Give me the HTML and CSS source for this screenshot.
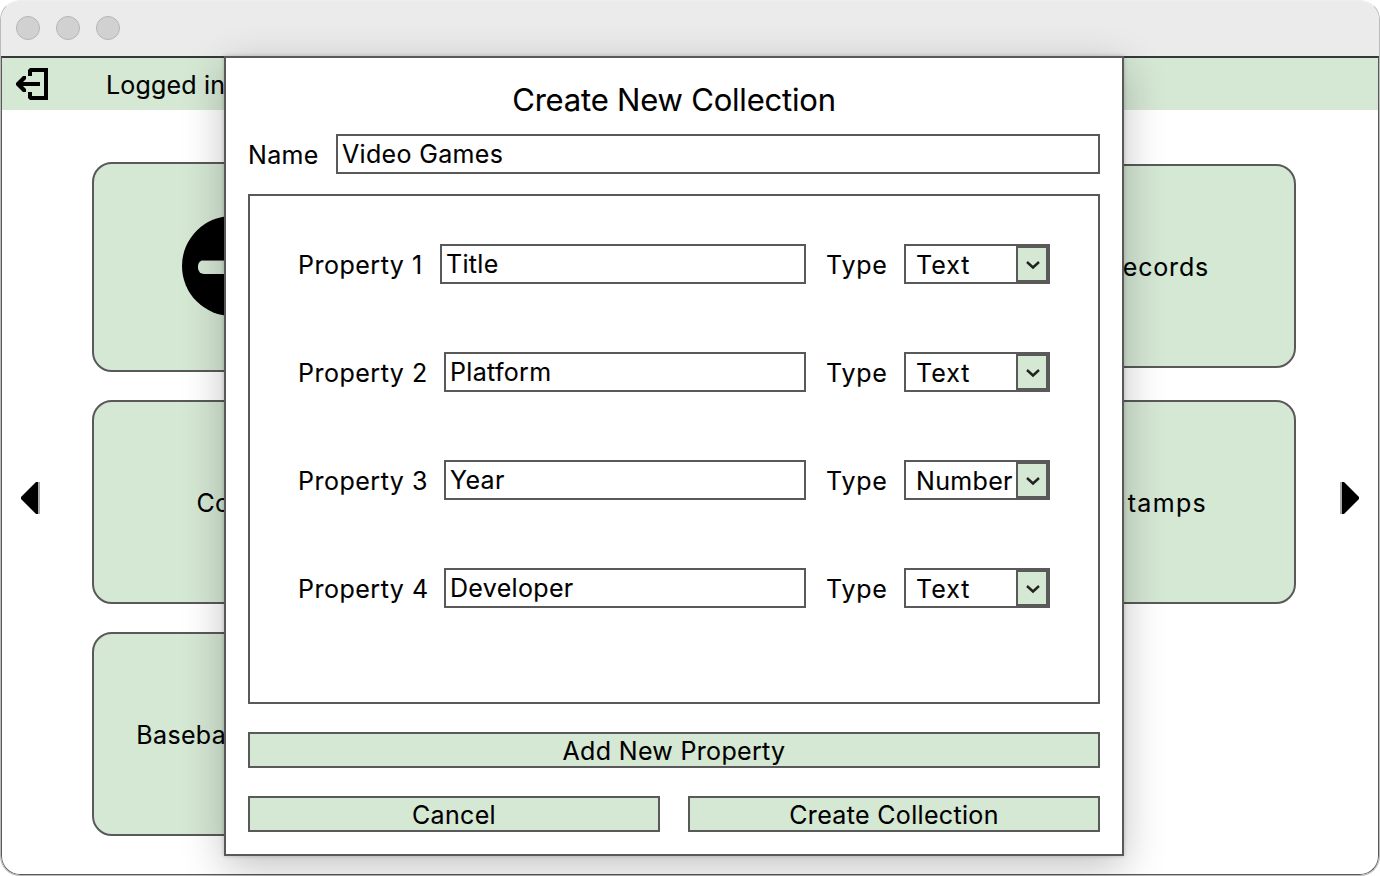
FILE: index.html
```html
<!DOCTYPE html>
<html lang="en">
<head>
<meta charset="utf-8">
<title>Create New Collection</title>
<link rel="stylesheet" href="styles.css">
</head>
<body>
<div class="window">
  <header class="titlebar"><i class="light"></i><i class="light"></i><i class="light"></i></header>
  <div class="userbar">
    <svg class="logout" width="34" height="34" viewBox="0 0 34 34"><path d="M13 3L15 1H33V33H15L13 31V25H17V29H29V5H17V9H13Z"/><path d="M5 15H25V19H5Z"/><path d="M1 16L8 9H11V12L6 17L11 22V25H8L1 18Z"/></svg>
    <span>Logged in</span>
  </div>
  <main class="page">
    <svg class="arrow" width="20" height="32" viewBox="0 0 20 32"><path d="M18 0V32H16L1 17V15L16 0Z"/><path d="M18 0H20V32H18Z" fill="#aaa"/></svg>
    <div class="cards">
      <div class="column left">
        <div class="card tall"><svg width="100" height="100" viewBox="0 0 100 100"><circle cx="50" cy="50" r="50"/><rect x="16" y="44" width="68" height="14" rx="6" fill="#d5e8d4"/><path d="M20 44.500H80" stroke="#666"/></svg></div>
        <div class="card">Coins</div>
        <div class="card"><span class="long">Baseball Cards</span></div>
      </div>
      <div class="column right">
        <div class="card">Records</div>
        <div class="card stamps"><span class="initial">S</span>tamps</div>
      </div>
    </div>
    <svg class="arrow" width="20" height="32" viewBox="0 0 20 32"><path d="M2 0V32H4L19 17V15L4 0Z"/><path d="M0 0H2V32H0Z" fill="#aaa"/></svg>
  </main>
</div>
<section class="dialog">
  <h1>Create New Collection</h1>
  <div class="name-row"><label class="name">Name</label><div class="field">Video Games</div></div>
  <div class="properties">
    <div class="property"><label class="prop first">Property 1</label><div class="field">Title</div><label class="type">Type</label><div class="select"><span class="text">Text</span><b><svg width="14" height="10" viewBox="0 0 14 10"><path d="M1 2L7 7.500L13 2"/></svg></b></div></div>
    <div class="property"><label class="prop">Property 2</label><div class="field">Platform</div><label class="type">Type</label><div class="select"><span class="text">Text</span><b><svg width="14" height="10" viewBox="0 0 14 10"><path d="M1 2L7 7.500L13 2"/></svg></b></div></div>
    <div class="property"><label class="prop">Property 3</label><div class="field">Year</div><label class="type">Type</label><div class="select"><span>Number</span><b><svg width="14" height="10" viewBox="0 0 14 10"><path d="M1 2L7 7.500L13 2"/></svg></b></div></div>
    <div class="property"><label class="prop">Property 4</label><div class="field">Developer</div><label class="type">Type</label><div class="select"><span class="text">Text</span><b><svg width="14" height="10" viewBox="0 0 14 10"><path d="M1 2L7 7.500L13 2"/></svg></b></div></div>
  </div>
  <div class="button add">Add New Property</div>
  <div class="actions"><div class="button">Cancel</div><div class="button">Create Collection</div></div>
</section>
</body>
</html>
```
FILE: styles.css
```css
* { box-sizing: border-box; }
body { margin: 0; width: 1380px; height: 876px; overflow: hidden; background: #fff; color: #000; font: 25px/32px Inter, sans-serif; letter-spacing: .33px; -webkit-text-stroke: .1px #000; position: relative; }
.window { width: 1380px; height: 876px; border: 1px solid #bbb; border-top-color: #eee; border-radius: 20px; overflow: hidden; display: flex; flex-direction: column; }
.titlebar { height: 55px; flex: none; background: #ebebeb; display: flex; gap: 16px; padding: 15px 15px; }
.light { width: 24px; height: 24px; border-radius: 50%; background: #d1d1d1; border: 1px solid #b5b5b5; }
.userbar { height: 54px; flex: none; border: solid #595959; border-width: 2px 1px 0; border-top-color: #383838; background: #d5e8d4; display: flex; align-items: center; padding-left: 13px; gap: 57px; }
.userbar span { padding-top: 2px; letter-spacing: .2px; }
.page { flex: 1; border: 1px solid #595959; border-top: 0; border-radius: 0 0 19px 19px; display: flex; align-items: center; padding: 0 18px; }
.arrow { flex: none; margin-top: 12px; }
.cards { flex: 1; align-self: stretch; display: flex; justify-content: space-between; padding: 52px 44px 0 52px; }
.column { width: 278px; display: flex; flex-direction: column; gap: 28px; }
.column.right { padding-top: 2px; gap: 32px; }
.card { height: 204px; flex: none; border: 2px solid #595959; border-radius: 20px; background: #d5e8d4; display: flex; align-items: center; justify-content: center; padding-top: 2px; }
.card.tall { height: 210px; padding: 0 0 2px 2px; }
.right .card { justify-content: flex-end; padding-right: 85px; letter-spacing: .8px; }
.right .stamps { padding-right: 87px; letter-spacing: 1.3px; }
.initial { margin-right: 3px; }
.long { white-space: nowrap; padding-right: 8px; }
.dialog { position: absolute; left: 224px; top: 56px; width: 900px; height: 800px; border: 2px solid #595959; background: #fff; padding: 26px 22px 0; box-shadow: 0 12px 40px rgba(0,0,0,.24), 0 0 4px rgba(0,0,0,.2); }
h1 { margin: 0; font-size: 31px; line-height: 32px; font-weight: 400; text-align: center; letter-spacing: -.2px; }
.name-row { display: flex; margin-top: 18px; height: 40px; }
label { padding-top: 5px; white-space: nowrap; flex: none; }
.name { width: 88px; }
.field { border: 2px solid #595959; flex: 1; padding: 2px 4px; white-space: nowrap; }
.properties { height: 510px; margin-top: 20px; border: 2px solid #595959; padding: 48px; display: flex; flex-direction: column; gap: 68px; }
.property { height: 40px; display: flex; }
.prop { width: 146px; letter-spacing: .5px; }
.prop.first { width: 142px; }
.type { width: 98px; padding-left: 20px; letter-spacing: .8px; }
.select { width: 146px; border: 2px solid #595959; display: flex; justify-content: space-between; padding-left: 10px; white-space: nowrap; }
.select span { width: 100px; padding-top: 3px; }
.select .text { letter-spacing: 1px; }
.select b { width: 32px; flex: none; border: 2px solid #595959; background: #d5e8d4; display: flex; align-items: center; justify-content: center; padding: 2px 0 0 2px; }
.select path { fill: none; stroke: #222; stroke-width: 2.4; }
.button { height: 36px; border: 2px solid #595959; background: #d5e8d4; text-align: center; padding-top: 1px; flex: 1; }
.add { margin: 28px 0; }
.actions { display: flex; gap: 28px; }
```
